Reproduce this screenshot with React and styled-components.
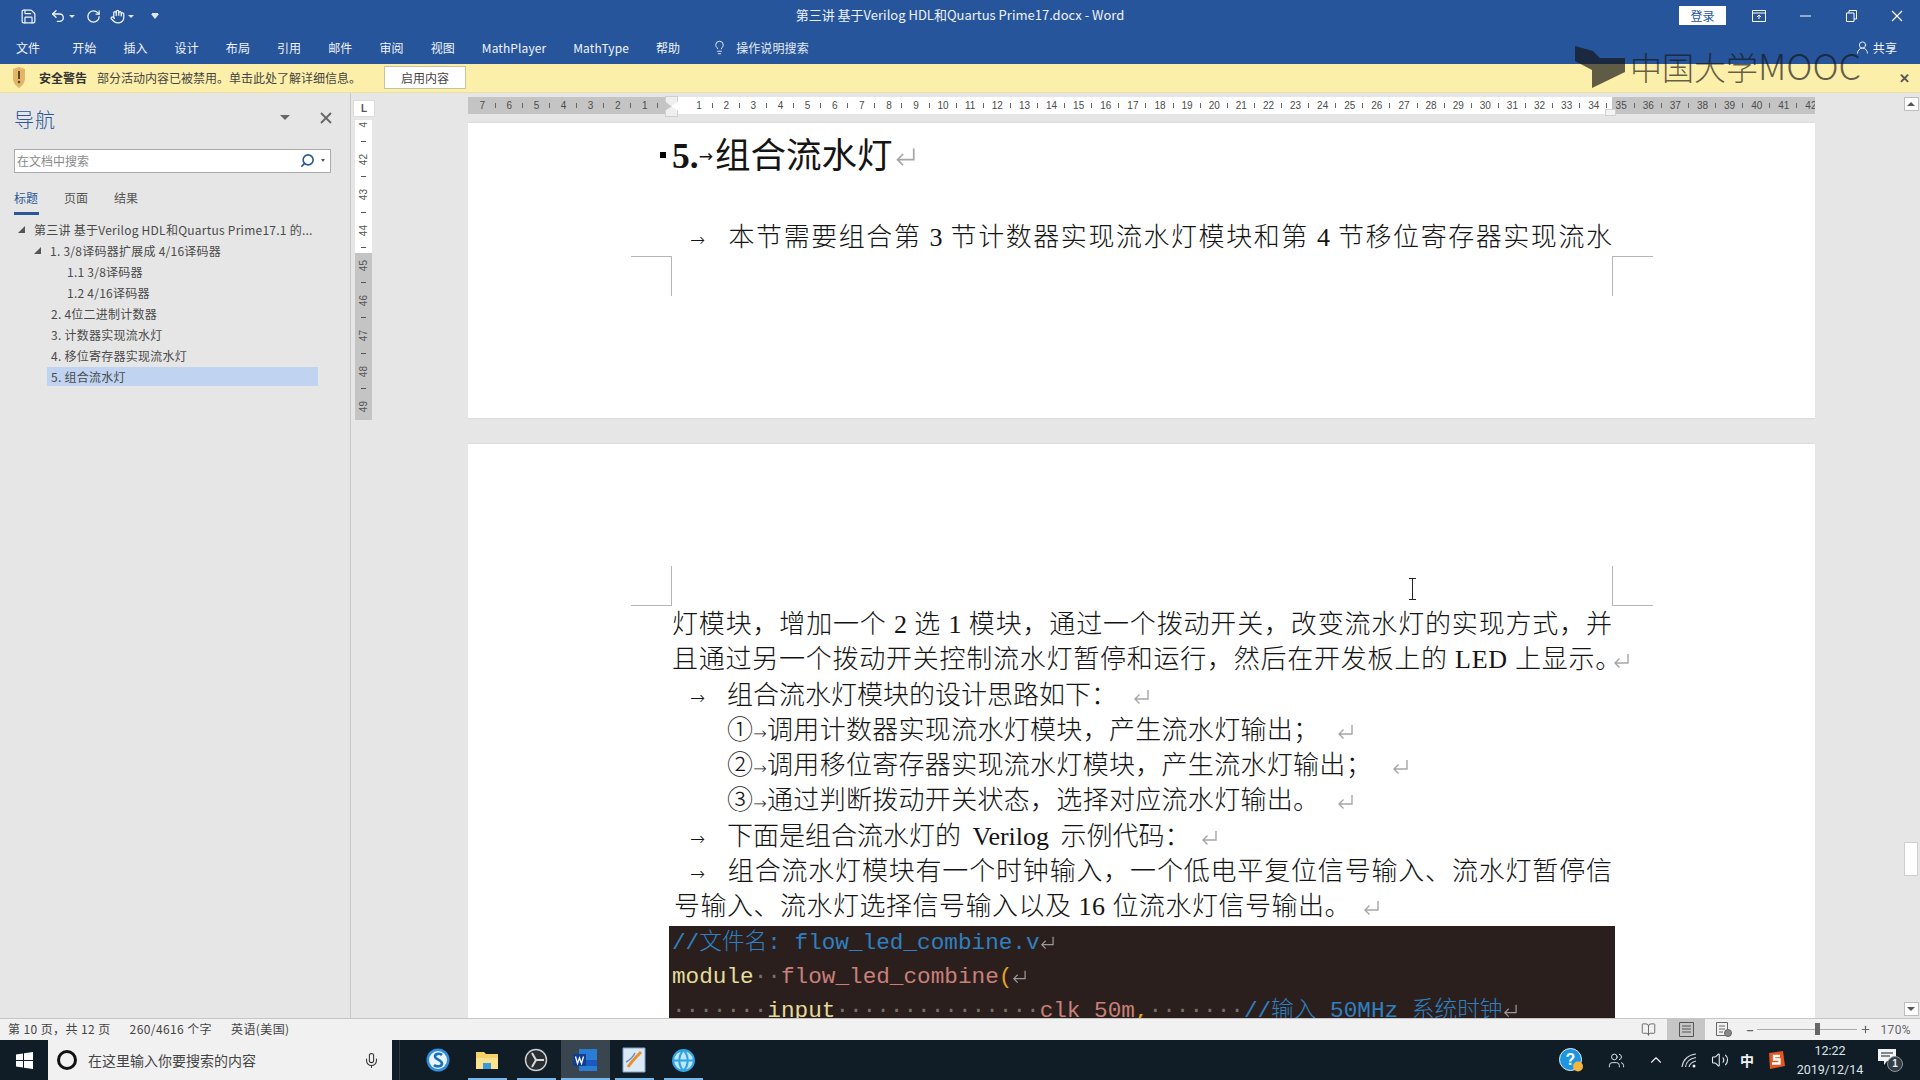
import React from "react";
import styled, { createGlobalStyle } from "styled-components";
import { Save, Undo2, RotateCw, Hand, Lightbulb, UserRound, Search, Mic, ChevronUp, Volume2, Users, BookOpen, Globe, Plus } from "lucide-react";

const UI = `"Noto Sans CJK SC", "Roboto", "Liberation Sans", sans-serif`;
const LATIN_UI = `"Roboto", "Noto Sans CJK SC", sans-serif`;
const BODY = `"Liberation Serif", "Noto Sans CJK SC", serif`;

const Global = createGlobalStyle`
  html, body { margin: 0; padding: 0; overflow: hidden; background: #e6e6e6; }
  * { box-sizing: border-box; }
`;

const Window = styled.div`
  position: relative;
  width: 1920px;
  height: 1080px;
  display: flex;
  flex-direction: column;
  overflow: hidden;
  font-family: ${UI};
  font-size: 12px;
`;

const TitleBar = styled.div`
  height: 32px;
  background: #27559b;
  color: #fff;
  display: grid;
  grid-template-columns: 1fr auto 1fr;
  align-items: center;
`;
const Qat = styled.div`
  display: flex;
  align-items: center;
  padding-left: 20px;
  color: #f2f5fa;
`;
const QatSlot = styled.span`
  display: inline-flex;
  align-items: center;
  margin-right: ${(p) => p.$after || 0}px;
`;
const TinyCaret = styled.i`
  display: inline-block;
  width: 0;
  height: 0;
  margin-left: 3px;
  border-left: 3px solid transparent;
  border-right: 3px solid transparent;
  border-top: 3px solid #dfe6f2;
`;
const OverflowCaret = styled(TinyCaret)`
  border-left-width: 4px;
  border-right-width: 4px;
  border-top-width: 5px;
  box-shadow: 0 -2px 0 -1px #dfe6f2;
`;
const DocTitle = styled.div`
  font-size: 13px;
  color: #eef2f9;
  white-space: nowrap;
  padding-bottom: 4px;
`;
const WinControls = styled.div`
  display: flex;
  align-items: center;
  justify-content: flex-end;
`;
const SignIn = styled.button`
  width: 47px;
  height: 19px;
  padding: 0;
  border: 0;
  background: #fff;
  color: #27559b;
  font: 12px ${UI};
  margin-right: 10px;
  margin-bottom: 1px;
`;
const CtlBtn = styled.span`
  width: 46px;
  height: 32px;
  display: inline-flex;
  align-items: center;
  justify-content: center;
`;

const MenuBar = styled.div`
  height: 32px;
  background: #27559b;
  color: #f1f4fa;
  display: flex;
  align-items: center;
  padding: 0 0 2px 16px;
  gap: 27px;
  font-size: 12px;
  letter-spacing: 0.1px;
`;
const MenuItem = styled.span`
  white-space: nowrap;
  margin-right: ${(p) => p.$after || 0}px;
`;
const TellMe = styled.span`
  display: inline-flex;
  align-items: center;
  gap: 9px;
  margin-left: 5px;
  color: #e6ecf6;
`;
const Share = styled.span`
  margin-left: auto;
  margin-right: 23px;
  display: inline-flex;
  align-items: center;
  gap: 3px;
  font-size: 12px;
`;

const WarnBar = styled.div`
  height: 29px;
  background: #fcefa9;
  border-bottom: 1px solid #e9e0a8;
  display: flex;
  align-items: center;
  padding: 0 0 2px 12px;
  color: #444;
  font-size: 12px;
`;
const WarnStrong = styled.b`
  margin-left: 13px;
  margin-right: 10px;
  color: #333;
`;
const EnableBtn = styled.button`
  margin-left: 23px;
  width: 82px;
  height: 23px;
  padding: 0;
  background: #fff;
  border: 1px solid #c9c39a;
  font: 12px ${UI};
  color: #444;
`;
const WarnClose = styled.span`
  margin-left: auto;
  margin-right: 10px;
  font-size: 13px;
  font-weight: 700;
  color: #555;
`;

const Main = styled.div`
  flex: 1;
  display: flex;
  min-height: 0;
  background: #e6e6e6;
`;

const Nav = styled.aside`
  width: 351px;
  border-right: 1px solid #c8c8c8;
  padding: 0 19px 0 14px;
  color: #444;
  display: flex;
  flex-direction: column;
`;
const NavHead = styled.div`
  height: 52px;
  display: flex;
  align-items: center;
`;
const NavTitle = styled.div`
  font-size: 20px;
  color: #2b579a;
  flex: 1;
  font-weight: 300;
  letter-spacing: 1px;
`;
const NavCaret = styled.i`
  width: 0;
  height: 0;
  margin-right: 30px;
  margin-bottom: 3px;
  border-left: 5px solid transparent;
  border-right: 5px solid transparent;
  border-top: 5px solid #666;
`;
const NavClose = styled.span`
  margin-right: -1px;
  color: #666;
  display: inline-flex;
  margin-bottom: 3px;
`;
const SearchBox = styled.div`
  margin-top: 4px;
  height: 24px;
  border: 1px solid #ababab;
  background: #fff;
  display: flex;
  align-items: center;
  padding: 0 5px 2px 2px;
  color: #8a8a8a;
  font-size: 12px;
`;
const SearchHint = styled.span`
  flex: 1;
`;
const SearchCaret = styled.i`
  margin-left: 6px;
  width: 0;
  height: 0;
  border-left: 2.5px solid transparent;
  border-right: 2.5px solid transparent;
  border-top: 3px solid #555;
`;
const Tabs = styled.div`
  margin-top: 13px;
  display: flex;
  gap: 25px;
  height: 29px;
`;
const Tab = styled.div`
  height: 29px;
  line-height: 24px;
  width: 25px;
  font-size: 12px;
  color: ${(p) => (p.$active ? "#2b579a" : "#555")};
  border-bottom: ${(p) => (p.$active ? "3px solid #2b579a" : "0")};
`;
const Tree = styled.div`
  margin-top: 4px;
  display: flex;
  flex-direction: column;
`;
const TreeRow = styled.div`
  height: 21px;
  display: flex;
  align-items: center;
  white-space: nowrap;
  margin-left: ${(p) => p.$indent}px;
  padding-left: ${(p) => (p.$open ? 0 : 4)}px;
  margin-right: 13px;
  color: #4a4a4a;
  font-size: 12px;
  letter-spacing: 0.25px;
`;
const SelectedFill = styled.span`
  display: flex;
  align-items: center;
  height: 19px;
  background: #c0d4f2;
  flex: 1;
  margin-left: -4px;
  padding-left: 4px;
`;
const OpenMark = styled.i`
  width: 0;
  height: 0;
  margin-right: 9px;
  border-left: 7px solid transparent;
  border-bottom: 7px solid #555;
`;

const Editor = styled.div`
  flex: 1;
  display: flex;
  min-width: 0;
`;
const VRulerCol = styled.div`
  width: 117px;
  display: flex;
  flex-direction: column;
  padding-top: 7px;
  padding-left: 2px;
`;
const CornerBtn = styled.div`
  width: 22px;
  height: 17px;
  background: #fff;
  border: 1px solid #dcdcdc;
  display: flex;
  align-items: center;
  justify-content: center;
  font: 700 10px "Liberation Sans", sans-serif;
  color: #555;
`;
const VStrip = styled.div`
  width: 17px;
  margin-left: 2px;
  height: ${(p) => p.$h}px;
  background: ${(p) => (p.$grey ? "#c4c4c4" : "#fff")};
  margin-top: ${(p) => p.$top || 0}px;
  overflow: hidden;
`;
const VCell = styled.div`
  position: relative;
  height: 35.2px;
  display: flex;
  align-items: center;
  justify-content: center;
  margin-top: ${(p) => p.$top || 0}px;
  &::after {
    content: "";
    position: absolute;
    left: 6px;
    bottom: 0;
    width: 5px;
    height: 1px;
    background: #555;
  }
`;
const VNum = styled.span`
  writing-mode: vertical-rl;
  transform: rotate(180deg);
  font: 10px "Liberation Sans", sans-serif;
  color: #555;
`;

const DocCol = styled.div`
  width: 1347px;
  display: flex;
  flex-direction: column;
  overflow: hidden;
  position: relative;
`;
const HRuler = styled.div`
  margin-top: 4px;
  height: 17px;
  display: flex;
  flex: none;
`;
const HSeg = styled.div`
  display: flex;
  width: ${(p) => p.$w}px;
  background: ${(p) => (p.$grey ? "#c4c4c4" : "#fff")};
  justify-content: ${(p) => (p.$end ? "flex-end" : "flex-start")};
  padding-left: ${(p) => p.$pl || 0}px;
  padding-right: ${(p) => p.$pr || 0}px;
`;
const HCell = styled.div`
  flex: none;
  position: relative;
  width: 27.12px;
  text-align: center;
  font: 10px/18px "Liberation Sans", sans-serif;
  color: #4c4c4c;
  margin-left: ${(p) => p.$ml || 0}px;
  &::after {
    content: "";
    position: absolute;
    right: 0;
    top: 6px;
    width: 1px;
    height: 5px;
    background: #666;
  }
`;
const IndentMark = styled.div`
  position: absolute;
  left: 197px;
  top: 3px;
  width: 13px;
  height: 21px;
  background: #efefef;
  border: 1px solid #cfcfcf;
  clip-path: polygon(0 0, 100% 0, 100% 25%, 50% 50%, 100% 70%, 100% 100%, 0 100%, 0 70%, 50% 50%, 0 25%);
`;
const RightIndent = styled.div`
  position: absolute;
  left: 1137px;
  top: 16px;
  width: 11px;
  height: 7px;
  background: #f3f3f3;
  border: 1px solid #cfcfcf;
`;
const Page = styled.div`
  position: relative;
  flex: none;
  background: #fff;
  box-shadow: 0 0 2px #c9c9c9;
  padding: 0 203px 0 204px;
  color: #141414;
  font-family: ${BODY};
  font-weight: 300;
`;
const FirstPage = styled(Page)`
  margin-top: 9px;
  height: 295px;
  padding-top: 11px;
`;
const SecondPage = styled(Page)`
  margin-top: 26px;
  flex: 1;
  padding-top: 163px;
  overflow: hidden;
`;
const Crop = styled.i`
  position: absolute;
  width: 41px;
  height: 40px;
  top: ${(p) => p.$y}px;
  ${(p) => (p.$left ? "left: 163px;" : "right: 162px;")}
  ${(p) => (p.$left ? "border-right: 1px solid #b5b5b5;" : "border-left: 1px solid #b5b5b5;")}
  ${(p) => (p.$flip ? "border-bottom: 1px solid #b5b5b5;" : "border-top: 1px solid #b5b5b5;")}
`;
const Heading = styled.div`
  height: 44px;
  line-height: 44px;
  font-size: 35.5px;
  display: flex;
  align-items: center;
  margin-left: -12px;
  white-space: nowrap;
  font-weight: 400;
`;
const Bullet = styled.i`
  width: 6px;
  height: 6px;
  background: #000;
  margin-right: 6px;
  margin-top: -3px;
`;
const HeadNum = styled.b`
  font-weight: 700;
`;
const HeadArrow = styled.span`
  font-family: "DejaVu Sans", sans-serif;
  font-size: 17px;
  margin-right: 2px;
`;
const Line = styled.div`
  font-size: 26px;
  line-height: 35.3px;
  height: 35.3px;
  white-space: nowrap;
  padding-left: ${(p) => p.$pad || 0}px;
  text-align: ${(p) => (p.$fit ? "justify" : "left")};
  text-align-last: ${(p) => (p.$fit ? "justify" : "left")};
  letter-spacing: ${(p) => p.$ls || 0}px;
  word-spacing: ${(p) => p.$ws || 0}px;
  margin-top: ${(p) => p.$top || 0}px;
`;
const Arrow = styled.span`
  display: inline-block;
  width: 37px;
  text-align: left;
  text-align-last: left;
  font-family: "DejaVu Sans", sans-serif;
  font-size: 18px;
`;
const SmallArrow = styled.span`
  font-family: "DejaVu Sans", sans-serif;
  font-size: 16px;
`;
const RetMark = styled.svg`
  display: inline-block;
  margin-left: ${(p) => p.$ml}px;
  vertical-align: 0;
  overflow: visible;
`;
const Ret = ({ ml = 16, w = 16, h = 15, color = "#a6a6a6" }) => (
  <RetMark $ml={ml} width={w} height={h} viewBox="0 0 16 15" fill="none" stroke={color} strokeWidth="1.400">
    <path d="M15 1v9H2M6.500 5.500 2 10l4.500 4.500" />
  </RetMark>
);
const Code = styled.div`
  margin: 1px 0 0 -3px;
  width: 946px;
  height: 100px;
  background: #2a1f1d;
  padding-left: 3px;
  font-family: "Liberation Mono", "Noto Sans CJK SC", monospace;
  font-size: 22.7px;
`;
const CodeLine = styled.div`
  height: 34px;
  line-height: 34px;
  white-space: nowrap;
`;
const Tok = styled.span`
  color: ${(p) => p.$c};
`;

const Cursor = styled.svg`
  position: absolute;
  left: 940px;
  top: 134px;
`;

const Scroll = styled.div`
  margin-left: auto;
  width: 18px;
  display: flex;
  flex-direction: column;
  align-items: center;
  padding: 4px 0 2px;
`;
const ScrollBtn = styled.div`
  width: 15px;
  height: 14px;
  background: #fff;
  border: 1px solid #bdbdbd;
  display: flex;
  align-items: center;
  justify-content: center;
  margin-top: ${(p) => (p.$auto ? "auto" : "0")};
`;
const Tri = styled.i`
  width: 0;
  height: 0;
  border-left: 4px solid transparent;
  border-right: 4px solid transparent;
  ${(p) => (p.$up ? "border-bottom: 4px solid #555;" : "border-top: 4px solid #555;")}
`;
const Thumb = styled.div`
  width: 14px;
  height: 34px;
  margin-top: 731px;
  background: #fff;
  border: 1px solid #cfcfcf;
`;

const Status = styled.div`
  height: 22px;
  background: #f1f1f1;
  border-top: 1px solid #c6c6c6;
  display: flex;
  align-items: center;
  padding-left: 8px;
  color: #444;
  font-size: 12px;
  letter-spacing: 0.4px;
  gap: 19px;
`;
const StatusText = styled.span`
  padding-bottom: 2px;
`;
const StatusRight = styled.div`
  margin-left: auto;
  display: flex;
  align-items: center;
  height: 100%;
  color: #666;
`;
const ViewBtn = styled.span`
  width: 38px;
  height: 100%;
  display: inline-flex;
  align-items: center;
  justify-content: center;
  background: ${(p) => (p.$active ? "#c6c6c6" : "transparent")};
`;
const Zoom = styled.div`
  margin-left: 3px;
  display: flex;
  align-items: center;
  width: 125px;
  justify-content: space-between;
  font-weight: 700;
  color: #666;
`;
const Slider = styled.div`
  position: relative;
  width: 100px;
  height: 1px;
  background: #aaa;
`;
const SliderThumb = styled.i`
  position: absolute;
  left: 58px;
  top: -6px;
  width: 5px;
  height: 12px;
  background: #666;
`;
const ZoomPct = styled.span`
  margin-left: 9px;
  margin-right: 9px;
  font-size: 12px;
  font-family: ${LATIN_UI};
  letter-spacing: 0.4px;
`;

const Taskbar = styled.div`
  height: 40px;
  background: #101d27;
  display: flex;
  align-items: stretch;
  color: #eef1f4;
`;
const StartBtn = styled.div`
  width: 48px;
  display: flex;
  align-items: center;
  justify-content: center;
`;
const TaskSearch = styled.div`
  width: 344px;
  background: #f1f1f1;
  display: flex;
  align-items: center;
  padding: 0 12px 0 9px;
  color: #444;
`;
const Cortana = styled.i`
  width: 20px;
  height: 20px;
  border-radius: 50%;
  border: 3px solid #111;
  margin-right: 11px;
`;
const SearchText = styled.span`
  flex: 1;
  font-size: 14px;
`;
const TaskIcons = styled.div`
  display: flex;
  align-items: stretch;
  padding-left: 13.5px;
  margin-left: 7px;
  border-left: 1px solid #2a3640;
`;
const TaskIcon = styled.div`
  position: relative;
  width: 49px;
  display: flex;
  align-items: center;
  justify-content: center;
  background: ${(p) => (p.$active ? "#39464f" : "transparent")};
  &::after {
    content: "";
    position: absolute;
    bottom: 0;
    left: ${(p) => (p.$active ? 0 : 5)}px;
    right: ${(p) => (p.$active ? 0 : 5)}px;
    height: 2px;
    background: ${(p) => (p.$on ? "#76b9ed" : "transparent")};
  }
`;
const Tray = styled.div`
  margin-left: auto;
  display: flex;
  align-items: center;
`;
const TraySlot = styled.span`
  width: ${(p) => p.$w}px;
  display: inline-flex;
  align-items: center;
  justify-content: center;
  font-size: ${(p) => p.$fs || 13}px;
  font-weight: ${(p) => p.$fw || 400};
`;
const Clock = styled.div`
  width: 84px;
  text-align: center;
  font: 12.5px/19px ${LATIN_UI};
  color: #dfe4e8;
`;
const Notice = styled.span`
  position: relative;
  width: 48px;
  padding: 0 0 6px 6px;
  display: inline-flex;
`;
const NoticeBadge = styled.b`
  position: absolute;
  left: 15px;
  top: 7px;
  width: 16px;
  height: 16px;
  border-radius: 50%;
  background: #333d45;
  border: 1px solid #8b949a;
  font: 700 10px/14px "Liberation Sans", sans-serif;
  text-align: center;
`;

const Watermark = styled.div`
  position: absolute;
  left: 1575px;
  top: 46px;
  display: flex;
  align-items: center;
  gap: 5px;
  color: rgba(20, 20, 20, 0.68);
  pointer-events: none;
`;
const MoocWords = styled.span`
  margin-top: -4px;
`;
const MoocCjk = styled.span`
  font-family: "Noto Sans CJK SC", sans-serif;
  font-size: 32px;
  font-weight: 300;
  line-height: 42px;
  white-space: nowrap;
`;
const MoocLatin = styled.span`
  font-family: "Noto Sans CJK SC", sans-serif;
  font-size: 36px;
  font-weight: 300;
  line-height: 42px;
`;

const range = (a, b) => Array.from({ length: b - a + 1 }, (_, i) => a + i);

const tree = [
  { t: "第三讲 基于Verilog HDL和Quartus Prime17.1 的...", indent: 4, open: true },
  { t: "1. 3/8译码器扩展成 4/16译码器", indent: 20, open: true },
  { t: "1.1 3/8译码器", indent: 49 },
  { t: "1.2 4/16译码器", indent: 49 },
  { t: "2. 4位二进制计数器", indent: 33 },
  { t: "3. 计数器实现流水灯", indent: 33 },
  { t: "4. 移位寄存器实现流水灯", indent: 33 },
  { t: "5. 组合流水灯", indent: 33, selected: true },
];

const menus = ["开始", "插入", "设计", "布局", "引用", "邮件", "审阅", "视图", "MathPlayer", "MathType", "帮助"];

const DOT = "#77706a";
const Dots = ({ n }) => <Tok $c={DOT}>{"·".repeat(n)}</Tok>;

const WinLogo = ({ size = 17, color = "#fff" }) => (
  <svg width={size} height={size} viewBox="0 0 17 17" fill={color}>
    <path d="M0 2.400 7 1.400V8H0ZM8 1.300 17 0V8H8ZM0 9H7V15.600L0 14.600ZM8 9H17V17L8 15.700Z" />
  </svg>
);

const App = () => (
  <Window>
    <Global />
    <TitleBar>
      <Qat>
        <QatSlot $after={13}><Save size={17} strokeWidth={1.7} /></QatSlot>
        <QatSlot $after={11}><Undo2 size={16} strokeWidth={2} /><TinyCaret /></QatSlot>
        <QatSlot $after={9}><RotateCw size={15} strokeWidth={2} /></QatSlot>
        <QatSlot $after={14}><Hand size={15} strokeWidth={2} /><TinyCaret /></QatSlot>
        <QatSlot><OverflowCaret /></QatSlot>
      </Qat>
      <DocTitle>第三讲 基于Verilog HDL和Quartus Prime17.docx  -  Word</DocTitle>
      <WinControls>
        <SignIn>登录</SignIn>
        <CtlBtn>
          <svg width="14" height="12" viewBox="0 0 14 12" fill="none" stroke="#fff"><path d="M.5.5h13v11H.5zM.5 3h13M7 9V5M5 7l2-2 2 2" /></svg>
        </CtlBtn>
        <CtlBtn>
          <svg width="11" height="2" viewBox="0 0 11 2"><path d="M0 1h11" stroke="#fff" /></svg>
        </CtlBtn>
        <CtlBtn>
          <svg width="11" height="12" viewBox="0 0 11 12" fill="none" stroke="#fff"><path d="M.5 3h7.500v8.500H.5zM3 3V.5h7.500V9H8" /></svg>
        </CtlBtn>
        <CtlBtn>
          <svg width="12" height="12" viewBox="0 0 12 12" stroke="#fff" strokeWidth="1.200"><path d="M1 1l10 10M11 1L1 11" /></svg>
        </CtlBtn>
      </WinControls>
    </TitleBar>
    <MenuBar>
      <MenuItem $after={5}>文件</MenuItem>
      {menus.map((m) => <MenuItem key={m}>{m}</MenuItem>)}
      <TellMe><Lightbulb size={15} strokeWidth={1.5} />操作说明搜索</TellMe>
      <Share><UserRound size={15} strokeWidth={1.5} />共享</Share>
    </MenuBar>
    <WarnBar>
      <svg width="14" height="21" viewBox="0 0 14 21">
        <path d="M1 2 7 0l6 2v9c0 5-3 8-6 10-3-2-6-5-6-10Z" fill="#e3b568" />
        <path d="M7 4v8" stroke="#5b4a2a" strokeWidth="2" />
        <circle cx="7" cy="15" r="1.300" fill="#5b4a2a" />
      </svg>
      <WarnStrong>安全警告</WarnStrong>
      部分活动内容已被禁用。单击此处了解详细信息。
      <EnableBtn>启用内容</EnableBtn>
      <WarnClose>✕</WarnClose>
    </WarnBar>
    <Main>
      <Nav>
        <NavHead>
          <NavTitle>导航</NavTitle>
          <NavCaret />
          <NavClose>
            <svg width="12" height="12" viewBox="0 0 12 12" stroke="#666" strokeWidth="1.800"><path d="M1 1l10 10M11 1 1 11" /></svg>
          </NavClose>
        </NavHead>
        <SearchBox>
          <SearchHint>在文档中搜索</SearchHint>
          <Search size={15} color="#2b579a" strokeWidth={2.6} style={{ transform: "scaleX(-1)" }} />
          <SearchCaret />
        </SearchBox>
        <Tabs>
          <Tab $active>标题</Tab>
          <Tab>页面</Tab>
          <Tab>结果</Tab>
        </Tabs>
        <Tree>
          {tree.map((r) => (
            <TreeRow key={r.t} $indent={r.indent} $open={r.open}>
              {r.open && <OpenMark />}
              {r.selected ? <SelectedFill>{r.t}</SelectedFill> : r.t}
            </TreeRow>
          ))}
        </Tree>
      </Nav>
      <Editor>
        <VRulerCol>
          <CornerBtn>L</CornerBtn>
          <VStrip $h={133} $top={3}>
            {["4", 42, 43, 44].map((n, i) => (
              <VCell key={n} $top={i === 0 ? -13 : 0}><VNum>{n}</VNum></VCell>
            ))}
          </VStrip>
          <VStrip $h={167} $grey>
            {range(45, 49).map((n, i) => (
              <VCell key={n} $top={i === 0 ? -5 : 0}><VNum>{n}</VNum></VCell>
            ))}
          </VStrip>
        </VRulerCol>
        <DocCol>
          <HRuler>
            <HSeg $w={204} $grey $end $pr={13.6}>
              {[7, 6, 5, 4, 3, 2, 1].map((n) => <HCell key={n}>{n}</HCell>)}
            </HSeg>
            <HSeg $w={940} $pl={13.6}>
              {range(1, 34).map((n) => <HCell key={n}>{n}</HCell>)}
            </HSeg>
            <HSeg $w={203} $grey>
              {range(35, 42).map((n, i) => <HCell key={n} $ml={i === 0 ? -4.4 : 0}>{n}</HCell>)}
            </HSeg>
          </HRuler>
          <IndentMark />
          <RightIndent />
          <FirstPage>
            <Heading>
              <Bullet />
              <HeadNum>5.</HeadNum>
              <HeadArrow>→</HeadArrow>
              组合流水灯
              <Ret ml={3} w={20} h={19} />
            </Heading>
            <Line $pad={18} $fit $top={42}>
              <Arrow>→</Arrow>本节需要组合第 3 节计数器实现流水灯模块和第 4 节移位寄存器实现流水
            </Line>
            <Crop $left $y={133} />
            <Crop $y={133} />
          </FirstPage>
          <SecondPage>
            <Crop $left $flip $y={122} />
            <Crop $flip $y={122} />
            <Cursor width="9" height="22" viewBox="0 0 9 22" fill="none" stroke="#222">
              <path d="M1 .5h7M4.500 .5v21M1 21.500h7" />
            </Cursor>
            <Line $fit>灯模块，增加一个 2 选 1 模块，通过一个拨动开关，改变流水灯的实现方式，并</Line>
            <Line $ls={0.75}>且通过另一个拨动开关控制流水灯暂停和运行，然后在开发板上的 LED 上显示。<Ret ml={-9} /></Line>
            <Line $pad={18}><Arrow>→</Arrow>组合流水灯模块的设计思路如下：<Ret /></Line>
            <Line $pad={55} $ls={0.3}>①<SmallArrow>→</SmallArrow>调用计数器实现流水灯模块，产生流水灯输出；<Ret ml={18} /></Line>
            <Line $pad={55} $ls={0.3}>②<SmallArrow>→</SmallArrow>调用移位寄存器实现流水灯模块，产生流水灯输出；<Ret ml={20} /></Line>
            <Line $pad={55} $ls={0.3}>③<SmallArrow>→</SmallArrow>通过判断拨动开关状态，选择对应流水灯输出。<Ret ml={18} /></Line>
            <Line $pad={18} $ws={5}><Arrow>→</Arrow>下面是组合流水灯的 Verilog 示例代码：<Ret ml={10} /></Line>
            <Line $pad={18} $fit><Arrow>→</Arrow>组合流水灯模块有一个时钟输入，一个低电平复位信号输入、流水灯暂停信</Line>
            <Line $pad={2} $ls={0.5}>号输入、流水灯选择信号输入以及 16 位流水灯信号输出。<Ret ml={12} /></Line>
            <Code>
              <CodeLine>
                <Tok $c="#2f80c0">//文件名: flow_led_combine.v</Tok><Ret ml={0} w={14} h={13} color="#9a9a9a" />
              </CodeLine>
              <CodeLine>
                <Tok $c="#e5dc9c">module</Tok><Dots n={2} /><Tok $c="#c9807a">flow_led_combine</Tok><Tok $c="#e0a526">(</Tok><Ret ml={0} w={14} h={13} color="#9a9a9a" />
              </CodeLine>
              <CodeLine>
                <Dots n={7} /><Tok $c="#e5dc9c">input</Tok><Dots n={15} /><Tok $c="#c9807a">clk_50m</Tok><Tok $c="#e0a526">,</Tok><Dots n={7} /><Tok $c="#2f80c0">//输入 50MHz 系统时钟</Tok><Ret ml={0} w={14} h={13} color="#9a9a9a" />
              </CodeLine>
            </Code>
          </SecondPage>
        </DocCol>
        <Scroll>
          <ScrollBtn><Tri $up /></ScrollBtn>
          <Thumb />
          <ScrollBtn $auto><Tri /></ScrollBtn>
        </Scroll>
      </Editor>
    </Main>
    <Status>
      <StatusText>第 10 页，共 12 页</StatusText>
      <StatusText>260/4616 个字</StatusText>
      <StatusText>英语(美国)</StatusText>
      <StatusRight>
        <ViewBtn><BookOpen size={15} strokeWidth={1.5} /></ViewBtn>
        <ViewBtn $active>
          <svg width="15" height="15" viewBox="0 0 15 15" fill="none" stroke="#555"><path d="M.5 .5h14v14H.5zM3 4h9M3 7h9M3 10h9" /></svg>
        </ViewBtn>
        <ViewBtn>
          <svg width="16" height="15" viewBox="0 0 16 15" fill="none" stroke="#666"><path d="M.5 .5h11v13H.5zM3 4h6M3 7h6M3 10h4" /><circle cx="12" cy="11" r="3.500" fill="#888" /></svg>
        </ViewBtn>
        <Zoom>
          −<Slider><SliderThumb /></Slider><Plus size={11} strokeWidth={2.5} />
        </Zoom>
        <ZoomPct>170%</ZoomPct>
      </StatusRight>
    </Status>
    <Taskbar>
      <StartBtn><WinLogo /></StartBtn>
      <TaskSearch>
        <Cortana />
        <SearchText>在这里输入你要搜索的内容</SearchText>
        <Mic size={17} color="#333" strokeWidth={1.5} />
      </TaskSearch>
      <TaskIcons>
        <TaskIcon>
          <svg width="24" height="24" viewBox="0 0 24 24"><circle cx="12" cy="12" r="11.500" fill="#2f8fe0" /><circle cx="12" cy="12" r="9" fill="#eaf4fc" /><path d="M16 7c-2-2-7-1.500-7 1.500S16 12 16 15.500 10 19 8 17" fill="none" stroke="#1c6fc0" strokeWidth="2.600" /></svg>
        </TaskIcon>
        <TaskIcon $on>
          <svg width="24" height="22" viewBox="0 0 24 22"><path d="M1 3h8l2 2h12v15H1Z" fill="#f6d36a" /><path d="M1 9h22v11H1Z" fill="#fbe28e" /><path d="M8 14h8v6H8Z" fill="#3a9bdc" /></svg>
        </TaskIcon>
        <TaskIcon $on>
          <svg width="24" height="24" viewBox="0 0 24 24" fill="none"><circle cx="12" cy="12" r="10.500" fill="#2a2f33" stroke="#c9cdd0" strokeWidth="1.500" /><path d="M12 12 8 5M12 12h8M12 12l-4 7" stroke="#d8dbdd" strokeWidth="2" /></svg>
        </TaskIcon>
        <TaskIcon $on $active>
          <svg width="25" height="24" viewBox="0 0 25 24"><path d="M6 1h18v22H6Z" fill="#2b7cd3" /><path d="M6 12h18v6H6Z" fill="#185abd" /><path d="M0 6h13v12H0Z" fill="#103f91" /><path d="M2.500 8.500 4.500 15.500 6.500 10 8.500 15.500 10.500 8.500" fill="none" stroke="#fff" strokeWidth="1.300" /></svg>
        </TaskIcon>
        <TaskIcon $on>
          <svg width="24" height="26" viewBox="0 0 24 26"><path d="M1 1h22v24H1Z" fill="#dbe8f5" stroke="#7fa6cf" /><path d="M6 20C10 14 15 9 19 5" stroke="#e8912c" strokeWidth="3" fill="none" /><path d="M4 15c4-2 7-5 9-9" stroke="#6b8fc0" strokeWidth="1.500" fill="none" /></svg>
        </TaskIcon>
        <TaskIcon $on>
          <Globe size={25} color="#2ea3e6" fill="#bfe6fa" strokeWidth={2} />
        </TaskIcon>
      </TaskIcons>
      <Tray>
        <TraySlot $w={34}>
          <svg width="25" height="25" viewBox="0 0 25 25"><circle cx="11.500" cy="11.500" r="11" fill="#1e95e0" stroke="#dff1fb" /><text x="11.500" y="17" textAnchor="middle" fontSize="16" fontWeight="700" fill="#fff" fontFamily="Liberation Sans">?</text><circle cx="19" cy="18.500" r="5" fill="#f3b63a" /></svg>
        </TraySlot>
        <TraySlot $w={56}><Users size={17} strokeWidth={1.3} /></TraySlot>
        <TraySlot $w={24}><ChevronUp size={18} strokeWidth={1.5} /></TraySlot>
        <TraySlot $w={42}>
          <svg width="16" height="15" viewBox="0 0 16 15" fill="none" stroke="#cfd4d8" strokeWidth="1.200"><path d="M1 14C2 7 7 2 15 1M4.500 14C5 9 9 5.500 15 4.500M8 14c.5-2.500 3-5 7-6" /><circle cx="13" cy="13" r="1.500" fill="#eee" stroke="none" /></svg>
        </TraySlot>
        <TraySlot $w={20}><Volume2 size={18} strokeWidth={1.4} /></TraySlot>
        <TraySlot $w={34} $fs={14} $fw={700}>中</TraySlot>
        <TraySlot $w={24}>
          <svg width="18" height="18" viewBox="0 0 18 18"><path d="M2 2 16 0l2 15-15 3Z" fill="#e2561f" /><path d="M13 5H7v3.500h5.500v4H5" fill="none" stroke="#fff" strokeWidth="2.300" /></svg>
        </TraySlot>
        <Clock>12:22<br />2019/12/14</Clock>
        <Notice>
          <svg width="18" height="17" viewBox="0 0 18 17"><path d="M0 0h18v12H9l-3 4v-4H0Z" fill="#f2f4f5" /><path d="M3 4h12M3 7h9" stroke="#111c25" /></svg>
          <NoticeBadge>1</NoticeBadge>
        </Notice>
      </Tray>
    </Taskbar>
    <Watermark>
      <svg width="50" height="42" viewBox="0 0 50 42">
        <path d="M0 0 18 5 25 12H50V26L17 42V24L0 15Z" fill="rgba(20,20,20,.68)" />
      </svg>
      <MoocWords><MoocCjk>中国大学</MoocCjk><MoocLatin>MOOC</MoocLatin></MoocWords>
    </Watermark>
  </Window>
);

export default App;
